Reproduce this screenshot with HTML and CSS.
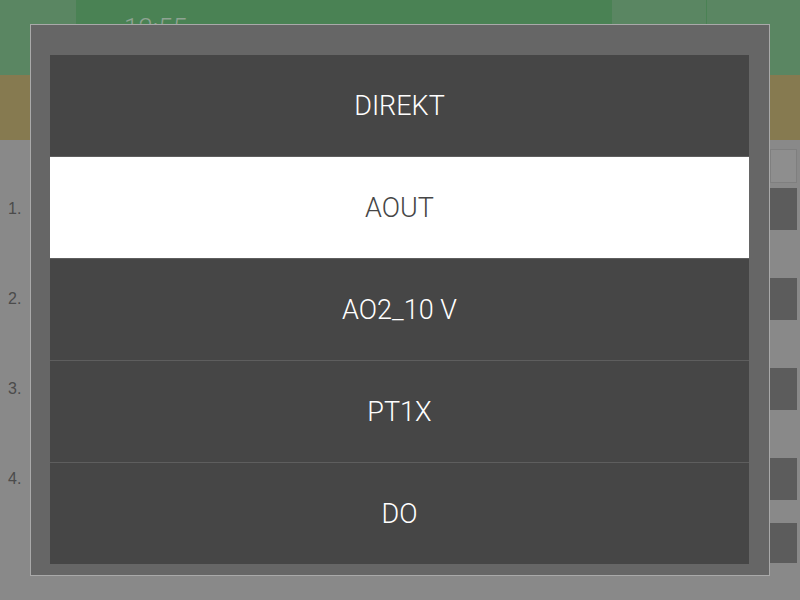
FILE: index.html
```html
<!DOCTYPE html>
<html>
<head>
<meta charset="utf-8">
<link rel="stylesheet" href="styles.css">
</head>
<body>
<div class="app">
  <header class="header">
    <div class="hd-left"></div>
    <div class="hd-mid"><span class="time">12:55</span></div>
    <div class="hd-r1"></div>
    <div class="hd-sep"></div>
    <div class="hd-r2"></div>
  </header>
  <div class="subbar"></div>
  <main class="content">
    <div class="toolbar"><div class="input-box"></div></div>
    <div class="row"><span class="num">1.</span><div class="btn"></div></div>
    <div class="row"><span class="num">2.</span><div class="btn"></div></div>
    <div class="row"><span class="num">3.</span><div class="btn"></div></div>
    <div class="row"><span class="num">4.</span><div class="btn"></div></div>
    <div class="row last"><span class="num"></span><div class="btn"></div></div>
  </main>
</div>
<div class="overlay">
  <div class="modal">
    <ul class="options">
      <li class="option">DIREKT</li>
      <li class="option selected">AOUT</li>
      <li class="option">AO2_10 V</li>
      <li class="option">PT1X</li>
      <li class="option">DO</li>
    </ul>
  </div>
</div>
</body>
</html>
```

FILE: styles.css
```css
html, body {
  margin: 0;
  padding: 0;
}
body {
  width: 800px;
  height: 600px;
  overflow: hidden;
  position: relative;
  font-family: Roboto, "Liberation Sans", sans-serif;
  background: #898989;
}
.app {
  display: flex;
  flex-direction: column;
  height: 600px;
}
.header {
  display: flex;
  height: 75px;
  flex: none;
}
.hd-left {
  width: 76px;
  background: #5a8662;
}
.hd-mid {
  flex: 1;
  background: #4a8254;
  padding: 13px 0 0 48px;
  box-sizing: border-box;
  overflow: hidden;
}
.time {
  font-size: 26px;
  font-weight: 300;
  color: #8fa393;
}
.hd-r1 {
  width: 94px;
  background: #5a8662;
}
.hd-sep {
  width: 1px;
  background: #4a8254;
}
.hd-r2 {
  width: 93px;
  background: #5a8662;
}
.subbar {
  height: 65px;
  flex: none;
  background: #867a50;
}
.content {
  flex: 1;
  background: #898989;
  display: flex;
  flex-direction: column;
  padding: 9px 3px 0 8px;
}
.toolbar {
  display: flex;
  justify-content: flex-end;
  height: 34px;
  margin-bottom: 5px;
}
.input-box {
  width: 27px;
  height: 34px;
  box-sizing: border-box;
  border: 1px solid #7f7f7f;
  background: #8e8e8e;
}
.row {
  display: flex;
  justify-content: space-between;
  align-items: center;
  height: 42px;
  margin-bottom: 48px;
}
.row.last {
  height: 40px;
  margin-top: -25px;
}
.num {
  font-size: 16px;
  color: #4b4b4b;
  font-family: "Liberation Sans", Arial, sans-serif;
}
.btn {
  width: 27px;
  height: 42px;
  background: #5c5c5c;
}
.row.last .btn {
  height: 40px;
}
.overlay {
  position: absolute;
  inset: 0;
}
.modal {
  position: absolute;
  left: 30px;
  top: 24px;
  width: 740px;
  height: 552px;
  box-sizing: border-box;
  border: 1px solid #a9a9a9;
  background: #666666;
  padding: 30px 20px 11px 19px;
}
.options {
  list-style: none;
  margin: 0;
  padding: 0;
  display: flex;
  flex-direction: column;
}
.option {
  height: 101px;
  display: flex;
  align-items: center;
  justify-content: center;
  background: #464646;
  color: #ffffff;
  font-size: 27px;
  font-weight: 300;
  border-top: 1px solid #5e5e5e;
}
.option:first-child {
  border-top: none;
}
.option.selected {
  background: #ffffff;
  color: #464646;
}
```
